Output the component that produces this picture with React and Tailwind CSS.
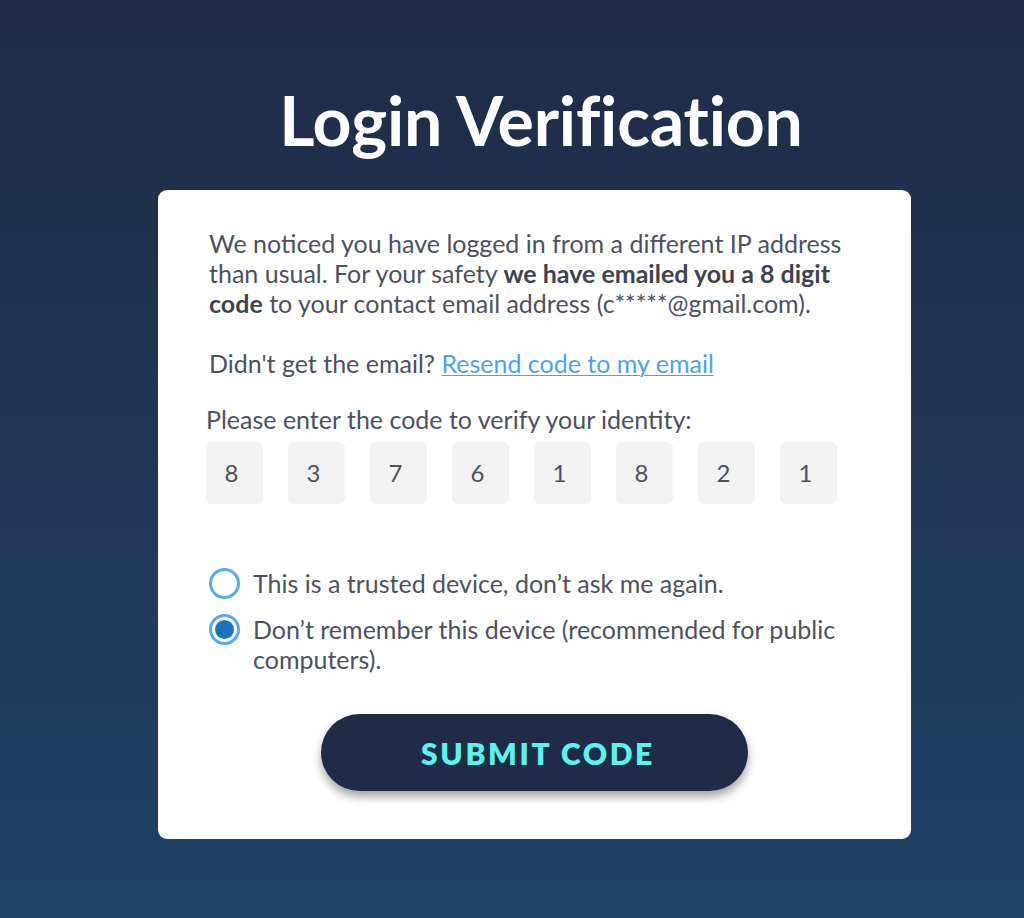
import React from "react";

export default function App() {
  const digits = ["8", "3", "7", "6", "1", "8", "2", "1"];
  return (
    <div
      className="w-full min-h-[918px] flex flex-col items-center bg-gradient-to-b from-[#1f2b47] to-[#1f4264]"
      style={{ fontFamily: "Lato, 'Open Sans', sans-serif" }}
    >
      <h1 className="mt-[77px] h-[86px] text-[68px] leading-[86px] font-bold text-white tracking-[-0.2px] ml-[58px]">
        Login Verification
      </h1>
      <div className="mt-[27px] ml-[45px] w-[753px] bg-white rounded-[9px] pt-[38px] pb-[48px] pl-[48px] pr-[50px] text-[#4d515e] text-[25px] leading-[30px]">
        <p className="pl-[3px]">
          We noticed you have logged in from a different IP address than usual. For your safety{" "}
          <b className="font-bold text-[#3f4350]">we have emailed you a 8 digit code</b> to your contact email address
          (c*****@gmail.com).
        </p>
        <p className="pl-[3px] mt-[30px]">
          Didn't get the email?{" "}
          <a href="#" className="text-[#4aa3f0] underline underline-offset-2 decoration-1">
            Resend code to my email
          </a>
        </p>
        <p className="mt-[26px]">Please enter the code to verify your identity:</p>
        <div className="mt-[8px] flex gap-[25px]">
          {digits.map((d, i) => (
            <div
              key={i}
              className="w-[57px] h-[62px] rounded-[6px] bg-[#f2f2f2] flex items-center justify-center pr-[6px] text-[24px] text-[#4d515e]"
            >
              {d}
            </div>
          ))}
        </div>
        <div className="mt-[64px] flex flex-col gap-[15px]">
          <label className="flex items-start gap-[13px]">
            <span className="ml-[3px] w-[31px] h-[31px] rounded-full border-[3px] border-[#5aa9f0] bg-white shrink-0" />
            <span>This is a trusted device, don’t ask me again.</span>
          </label>
          <label className="flex items-start gap-[13px]">
            <span className="ml-[3px] w-[31px] h-[31px] rounded-full border-[3px] border-[#5aa9f0] bg-white shrink-0 flex items-center justify-center">
              <span className="w-[19px] h-[19px] rounded-full bg-[#1b74bb]" />
            </span>
            <span className="w-[605px]">Don’t remember this device (recommended for public computers).</span>
          </label>
        </div>
        <div className="mt-[40px] flex justify-center">
          <button
            className="ml-[1px] w-[427px] h-[77px] pl-[8px] rounded-full bg-[#1f2b47] text-[#5cf3ef] text-[30px] font-extrabold tracking-[2.6px] shadow-[0_6px_10px_rgba(0,0,0,0.35)]"
            style={{ fontFamily: "Lato, sans-serif" }}
          >
            SUBMIT CODE
          </button>
        </div>
      </div>
    </div>
  );
}
